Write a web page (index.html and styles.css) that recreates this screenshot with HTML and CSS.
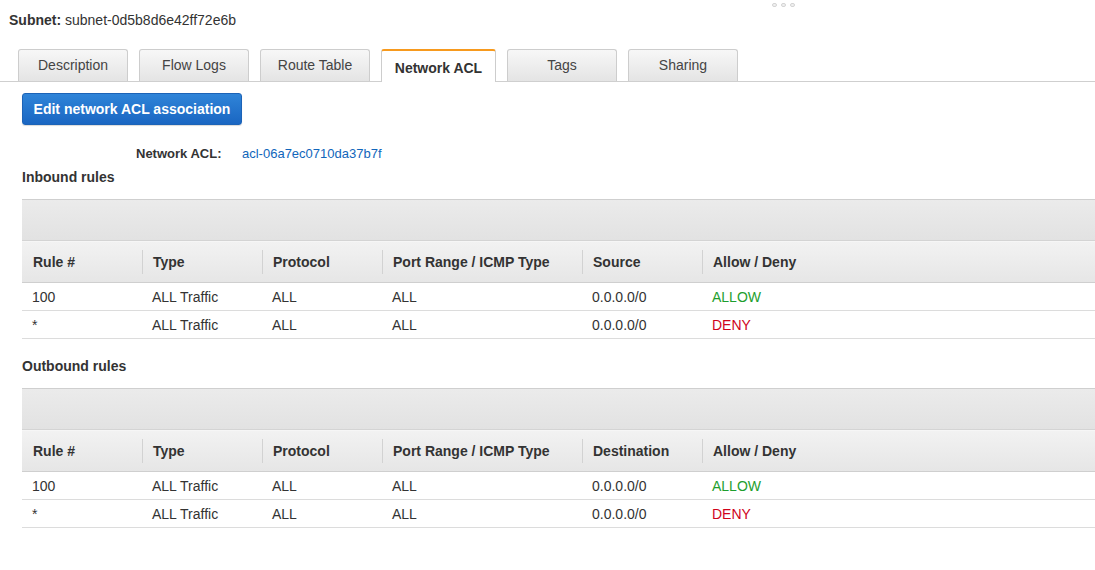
FILE: index.html
```html
<!DOCTYPE html>
<html>
<head>
<meta charset="utf-8">
<link rel="stylesheet" href="styles.css">
</head>
<body>
<div class="page">
  <div class="dots"><span></span><span></span><span></span></div>
  <div class="title"><b>Subnet:</b> subnet-0d5b8d6e42ff72e6b</div>
  <div class="tabs">
    <div class="tab">Description</div>
    <div class="tab">Flow Logs</div>
    <div class="tab">Route Table</div>
    <div class="tab active">Network ACL</div>
    <div class="tab">Tags</div>
    <div class="tab">Sharing</div>
  </div>
  <div class="content">
    <button class="btn">Edit network ACL association</button>
    <div class="acl-row"><span class="acl-label">Network ACL:</span><a class="acl-link">acl-06a7ec0710da37b7f</a></div>
    <div class="section-title">Inbound rules</div>
    <div class="table">
      <div class="toolbar"></div>
      <div class="row head">
        <div class="cell">Rule #</div>
        <div class="cell sep">Type</div>
        <div class="cell sep">Protocol</div>
        <div class="cell sep">Port Range / ICMP Type</div>
        <div class="cell sep">Source</div>
        <div class="cell sep">Allow / Deny</div>
      </div>
      <div class="row">
        <div class="cell">100</div><div class="cell">ALL Traffic</div><div class="cell">ALL</div><div class="cell">ALL</div><div class="cell">0.0.0.0/0</div><div class="cell allow">ALLOW</div>
      </div>
      <div class="row">
        <div class="cell">*</div><div class="cell">ALL Traffic</div><div class="cell">ALL</div><div class="cell">ALL</div><div class="cell">0.0.0.0/0</div><div class="cell deny">DENY</div>
      </div>
    </div>
    <div class="section-title out">Outbound rules</div>
    <div class="table">
      <div class="toolbar"></div>
      <div class="row head">
        <div class="cell">Rule #</div>
        <div class="cell sep">Type</div>
        <div class="cell sep">Protocol</div>
        <div class="cell sep">Port Range / ICMP Type</div>
        <div class="cell sep">Destination</div>
        <div class="cell sep">Allow / Deny</div>
      </div>
      <div class="row">
        <div class="cell">100</div><div class="cell">ALL Traffic</div><div class="cell">ALL</div><div class="cell">ALL</div><div class="cell">0.0.0.0/0</div><div class="cell allow">ALLOW</div>
      </div>
      <div class="row">
        <div class="cell">*</div><div class="cell">ALL Traffic</div><div class="cell">ALL</div><div class="cell">ALL</div><div class="cell">0.0.0.0/0</div><div class="cell deny">DENY</div>
      </div>
    </div>
  </div>
</div>
</body>
</html>
```
FILE: styles.css
```css
html, body {
  margin: 0;
  padding: 0;
  background: #fff;
}
body {
  font-family: "Liberation Sans", Arial, Helvetica, sans-serif;
  font-size: 14px;
  color: #333;
  width: 1095px;
  height: 570px;
  overflow: hidden;
}
.page {
  position: relative;
}
.dots {
  position: absolute;
  top: 3px;
  left: 772px;
  display: flex;
  gap: 4px;
}
.dots span {
  width: 5px;
  height: 4px;
  border: 1px solid #d4d4d4;
  border-radius: 2px;
  background: #f0f0f0;
  box-sizing: border-box;
}
.title {
  padding: 12px 0 0 9px;
  line-height: 16px;
  height: 16px;
  color: #333;
}
.title b {
  color: #333;
}
.tabs {
  display: flex;
  gap: 11px;
  padding-left: 18px;
  margin-top: 21px;
  height: 32px;
  border-bottom: 1px solid #cfcfcf;
  align-items: flex-end;
}
.tab {
  box-sizing: border-box;
  width: 110px;
  height: 32px;
  border: 1px solid #cdcdcd;
  border-bottom: none;
  border-radius: 3px 3px 0 0;
  background: linear-gradient(#f7f7f7, #e4e4e4);
  color: #444;
  text-align: center;
  line-height: 31px;
  font-size: 14px;
}
.tab.active {
  width: 115px;
  height: 33px;
  margin-bottom: -1px;
  background: #fff;
  border-top: 2px solid #f79a1e;
  font-weight: bold;
  color: #333;
  line-height: 34px;
}
.content {
  padding-left: 22px;
}
.btn {
  display: block;
  margin-top: 11px;
  width: 220px;
  height: 32px;
  border: 1px solid #1c63b7;
  border-radius: 3px;
  background: linear-gradient(#2f84d8, #1a66c2);
  color: #fff;
  font-family: "Liberation Sans", Arial, sans-serif;
  font-size: 14px;
  font-weight: bold;
  padding: 0;
  box-shadow: 0 1px 1px rgba(0,0,0,0.15);
}
.acl-row {
  display: flex;
  margin-top: 21px;
  height: 16px;
  line-height: 16px;
  font-size: 13px;
  padding-left: 114px;
}
.acl-label {
  width: 106px;
  font-weight: bold;
  color: #333;
}
.acl-link {
  color: #1166bb;
}
.section-title {
  margin-top: 7px;
  font-weight: bold;
  font-size: 14px;
  line-height: 16px;
  height: 16px;
  color: #333;
}
.section-title.out {
  margin-top: 19px;
}
.table {
  margin-top: 14px;
}
.toolbar {
  height: 40px;
  border-top: 1px solid #cfcfcf;
  border-bottom: 1px solid #d4d4d4;
  background: linear-gradient(#ebebeb, #e2e2e2);
}
.row {
  display: grid;
  grid-template-columns: 120px 120px 120px 200px 120px 1fr;
  height: 27px;
  border-bottom: 1px solid #dcdcdc;
  align-items: center;
}
.row.head {
  height: 40px;
  border-top: 1px solid #f6f6f6;
  border-bottom: 1px solid #cfcfcf;
  background: linear-gradient(#f2f2f2, #e6e6e6);
  font-weight: bold;
  color: #333;
}
.cell {
  padding-left: 11px;
  line-height: 16px;
  white-space: nowrap;
  color: #333;
}
.row .cell {
  padding-left: 10px;
}
.row.head .cell {
  padding-left: 11px;
  height: 24px;
  line-height: 24px;
}
.row.head .cell.sep {
  border-left: 1px solid #d2d2d2;
  padding-left: 10px;
}
.allow {
  color: #1e9e2e !important;
}
.deny {
  color: #d0021b !important;
}
```
